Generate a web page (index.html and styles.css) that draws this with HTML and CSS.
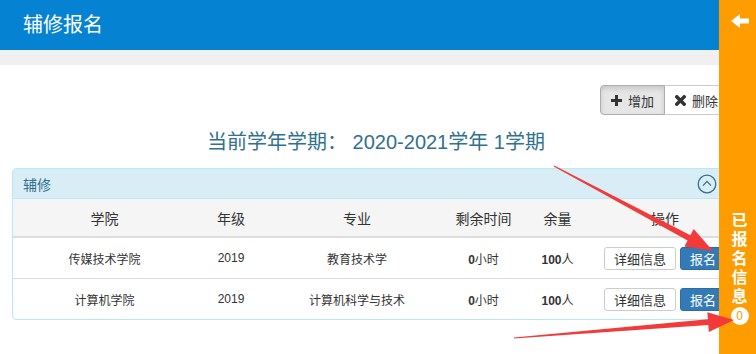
FILE: index.html
```html
<!DOCTYPE html>
<html lang="zh-CN">
<head>
<meta charset="utf-8">
<title>辅修报名</title>
<link rel="stylesheet" href="styles.css">
</head>
<body>
<div class="page">
  <header class="topbar">辅修报名</header>
  <div class="band"></div>
  <main class="content">
    <div class="toolbar">
      <div class="btn-group">
        <button class="btn btn-active" type="button">
          <svg class="ico" width="11" height="11" viewBox="0 0 11 11"><path d="M4 0h3v4h4v3H7v4H4V7H0V4h4z" fill="#333"/></svg>增加
        </button>
        <button class="btn btn-plain" type="button">
          <svg class="ico" width="11" height="11" viewBox="0 0 11 11"><path d="M1.8 1.8L9.2 9.2M9.2 1.8L1.8 9.2" stroke="#333" stroke-width="3.4" stroke-linecap="square"/></svg>删除
        </button>
      </div>
    </div>
    <h2 class="term">当前学年学期： 2020-2021学年 1学期</h2>
    <section class="panel">
      <div class="panel-heading">
        <span>辅修</span>
        <svg class="collapse" width="20" height="20" viewBox="0 0 20 20"><circle cx="10" cy="10" r="8.8" fill="none" stroke="#31708f" stroke-width="1.3"/><polyline points="6,11.6 10,7.4 14,11.6" fill="none" stroke="#31708f" stroke-width="1.3"/></svg>
      </div>
      <div class="grid thead">
        <div>学院</div><div>年级</div><div>专业</div><div>剩余时间</div><div>余量</div><div>操作</div>
      </div>
      <div class="grid row">
        <div>传媒技术学院</div><div>2019</div><div>教育技术学</div>
        <div><b>0</b>小时</div><div><b>100</b>人</div>
        <div class="ops"><button class="sbtn sbtn-default" type="button">详细信息</button><button class="sbtn sbtn-primary" type="button">报名</button></div>
      </div>
      <div class="grid row">
        <div>计算机学院</div><div>2019</div><div>计算机科学与技术</div>
        <div><b>0</b>小时</div><div><b>100</b>人</div>
        <div class="ops"><button class="sbtn sbtn-default" type="button">详细信息</button><button class="sbtn sbtn-primary" type="button">报名</button></div>
      </div>
    </section>
  </main>
  <aside class="sidebar">
    <svg class="side-arrow" width="18" height="14" viewBox="0 0 18 14"><path d="M0 7L9 0V4.6H18V9.4H9V14Z" fill="#fff"/></svg>
    <div class="side-text">已<br>报<br>名<br>信<br>息</div>
    <div class="badge">0</div>
  </aside>
  <svg class="annot" width="756" height="354" viewBox="0 0 756 354">
    <polygon points="553.7,166.5 687.6,240.4 684.3,246.6 713,251 693.7,229 690.4,235.2 554.3,165.5" fill="#f33a3a"/>
    <polygon points="514,338.6 708.3,325 708.8,332 734,320 707.3,312.2 707.9,319.2 514,337.4" fill="#f33a3a"/>
  </svg>
</div>
</body>
</html>
```
FILE: styles.css
```css
html, body {
  margin: 0;
  padding: 0;
}
body {
  font-family: "Liberation Sans", Arial, "Noto Sans CJK SC", sans-serif;
  color: #333;
  background: #fff;
  overflow: hidden;
}
.page {
  position: relative;
  width: 756px;
  height: 354px;
  overflow: hidden;
}
.topbar {
  height: 50px;
  background: #0583d2;
  color: #fff;
  font-size: 20px;
  line-height: 50px;
  padding-left: 23px;
}
.band {
  height: 15px;
  background: #f0f0f0;
}
.content {
  padding: 20px 16px 0 12px;
}
.toolbar {
  display: flex;
  justify-content: flex-end;
  padding-right: 11px;
}
.btn-group {
  display: flex;
}
.btn {
  display: flex;
  align-items: center;
  gap: 6px;
  height: 30px;
  padding: 0 10px;
  font-family: inherit;
  font-size: 13px;
  color: #333;
  border: 1px solid #ccc;
  background: #fff;
  margin: 0;
}
.btn-active {
  background: #e6e6e6;
  border-color: #adadad;
  border-radius: 4px 0 0 4px;
  box-shadow: inset 0 3px 5px rgba(0, 0, 0, 0.125);
}
.btn-plain {
  border-left: none;
  border-radius: 0 4px 4px 0;
}
.ico {
  display: block;
}
.term {
  margin: 13px 0 12px;
  font-size: 20px;
  line-height: 28px;
  font-weight: normal;
  text-align: center;
  color: #31708f;
}
.panel {
  border: 1px solid #bce8f1;
  border-radius: 4px;
  overflow: hidden;
}
.panel-heading {
  display: flex;
  align-items: center;
  justify-content: space-between;
  height: 29px;
  padding: 0 22px 0 10px;
  background: #d9edf7;
  color: #31708f;
  font-size: 14px;
  border-bottom: 1px solid #bce8f1;
}
.collapse {
  display: block;
}
.grid {
  display: grid;
  grid-template-columns: 183px 70px 182px 71px 77px 138px;
  align-items: center;
  text-align: center;
}
.thead {
  height: 37px;
  background: #f5f5f5;
  border-bottom: 2px solid #ddd;
  font-size: 14px;
}
.row {
  height: 40px;
  font-size: 12px;
}
.row + .row {
  border-top: 1px solid #ddd;
}
.row b {
  font-weight: bold;
}
.ops {
  display: flex;
  justify-content: center;
  gap: 4px;
}
.sbtn {
  height: 23px;
  padding: 0 9px;
  font-family: inherit;
  font-size: 13px;
  border-radius: 3px;
  border: 1px solid #ccc;
  margin: 0;
}
.sbtn-default {
  background: #fff;
  color: #333;
}
.sbtn-primary {
  background: #337ab7;
  border-color: #2e6da4;
  color: #fff;
}
.sidebar {
  position: absolute;
  top: 0;
  right: 0;
  width: 37px;
  height: 354px;
  box-sizing: border-box;
  padding-left: 4px;
  background: #ff9c00;
  display: flex;
  flex-direction: column;
  align-items: center;
  z-index: 5;
}
.side-arrow {
  display: block;
  margin-top: 14px;
}
.side-text {
  margin-top: 183px;
  color: #fff;
  font-weight: bold;
  font-size: 16px;
  line-height: 19px;
  text-align: center;
}
.badge {
  margin-top: 1px;
  width: 18px;
  height: 18px;
  border-radius: 50%;
  background: #fff;
  color: #ff9c00;
  font-size: 12px;
  line-height: 18px;
  text-align: center;
}
.annot {
  position: absolute;
  top: 0;
  left: 0;
  pointer-events: none;
  z-index: 10;
}
```
